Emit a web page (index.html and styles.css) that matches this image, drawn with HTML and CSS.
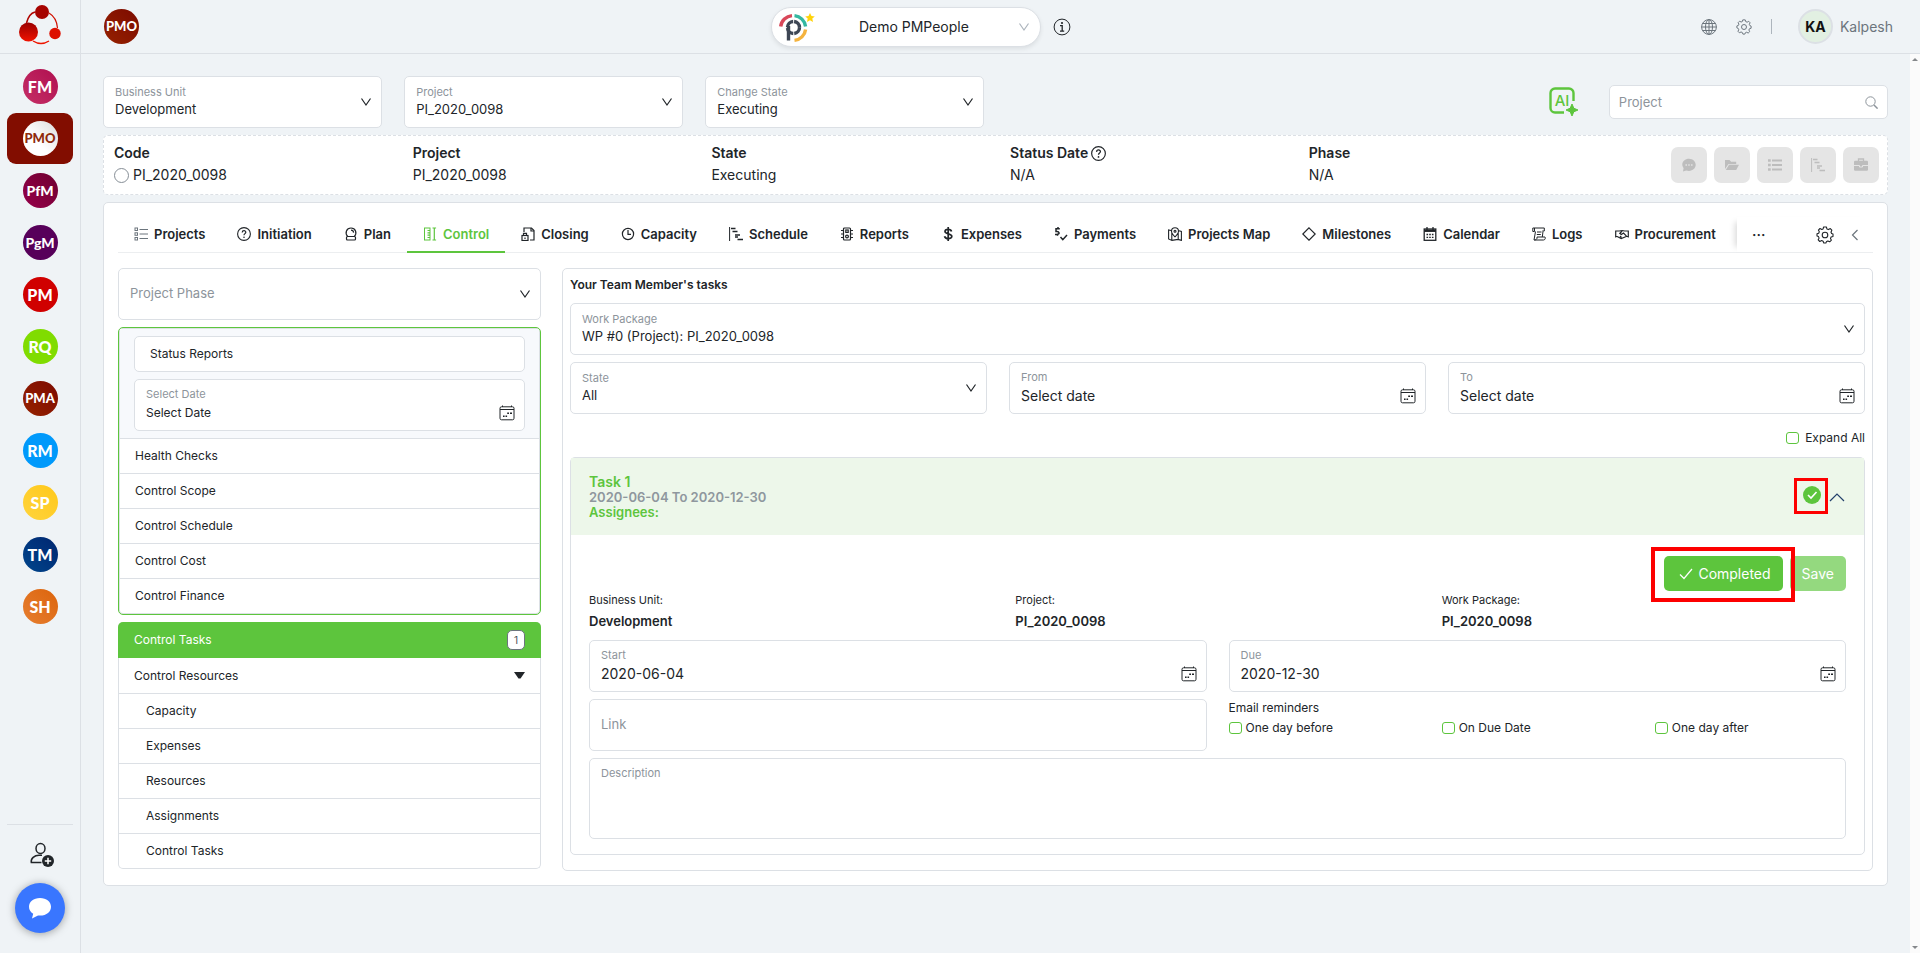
FILE: index.html
```html
<!DOCTYPE html>
<html lang="en">
<head>
    <meta charset="UTF-8">
    <meta name="viewport" content="width=device-width, initial-scale=1.0">
    <title>PMPeople</title>
    <link rel="stylesheet" href="styles.css">
</head>
<body>
    <!-- Shared icons -->
    <svg class="sprite" aria-hidden="true">
        <symbol id="i-down" viewBox="0 0 12 12"><path d="M1.5 2.5 6 9l4.5-6.500" fill="none" stroke="currentColor" stroke-width="1.200"/></symbol>
        <symbol id="i-calendar" viewBox="0 0 16 16">
            <rect x="1" y="1.800" width="14" height="13" rx="1.500" fill="none" stroke="currentColor"/>
            <path d="M1 4.500h14" stroke="currentColor" fill="none"/>
            <path d="M3.500 0.500v1.500M12.500 0.500v1.500" stroke="currentColor" fill="none"/>
            <path d="M4 10.500h1.600v1.500H4zM6.500 10.500h1.600v1.500H6.500zM8.200 7.500h1.800v1.500H8.200zM11 7.500h2v1.500h-2z" fill="currentColor"/>
        </symbol>
        <symbol id="i-gear" viewBox="0 0 18 18">
            <path d="M7.600 1h2.800l.5 1.900 1.600.7 1.800-1 1.500 1.600-.8 2 .6 1.200L17 8v2.400l-1.900.6-.6 1.400.9 1.800-1.700 1.600-1.800-.9-1.300.5L9.900 17H7.800l-.7-1.800-1.400-.6-1.900.9-1.600-1.700.9-1.700-.6-1.500L1 10V7.800l1.700-.6.6-1.400-.9-1.700L4 2.500l1.800.9 1.300-.5z" fill="none" stroke="currentColor" stroke-width="1.100" stroke-linejoin="round"/>
            <circle cx="9" cy="9" r="2.800" fill="none" stroke="currentColor" stroke-width="1.100"/>
        </symbol>
        <symbol id="i-help" viewBox="0 0 14 14">
            <circle cx="7" cy="7" r="6.400" fill="none" stroke="currentColor" stroke-width="1.100"/>
            <path d="M5.200 5.500C5.300 3 8.900 3.200 8.800 5.400 8.700 6.600 7 6.700 7 8.200" fill="none" stroke="currentColor" stroke-width="1.200"/>
            <circle cx="7" cy="10.200" r=".8" fill="currentColor"/>
        </symbol>
        <symbol id="i-gantt" viewBox="0 0 14 14"><path d="M.6 0v14" stroke="currentColor"/><path d="M2 1.500h4.500M3.500 4.500h5M6 8h5M8.500 12.500H14M6 10h3" stroke="currentColor" stroke-width="1.500"/></symbol>
    </svg>

    <header class="topbar">
        <a class="brand" href="#" aria-label="Home">
            <svg width="42" height="40" viewBox="0 0 42 40">
                <defs>
                    <linearGradient id="red" x1="0" y1="0" x2="0" y2="1"><stop offset="0" stop-color="#9a0000"/><stop offset="1" stop-color="#f01200"/></linearGradient>
                </defs>
                <path d="M7.500 18C9 12 12 8 16 7" fill="none" stroke="#b00500" stroke-width="1.600"/>
                <path d="M30 8c5 3 8 8 8.500 15" fill="none" stroke="#d01000" stroke-width="1.200"/>
                <path d="M14 36c5 3.200 11 3.200 16 0" fill="none" stroke="#ee1500" stroke-width="1.400"/>
                <circle cx="23" cy="7" r="7" fill="#a60300"/>
                <circle cx="9.500" cy="27" r="9.500" fill="url(#red)"/>
                <circle cx="36" cy="28.500" r="5.700" fill="#dd1000"/>
            </svg>
        </a>
        <div class="topbar-left"><span class="role role-long pmo">PMO</span></div>
        <div class="topbar-center">
            <button class="org" type="button">
                <svg width="38" height="32" viewBox="0 0 38 32">
                    <g fill="none" stroke-width="3.400">
                        <path d="M2.700 15.500A12.500 12.500 0 0 1 14 4.600" stroke="#d9485a"/>
                        <path d="M16.500 4.600A12.500 12.500 0 0 1 27.600 15.500" stroke="#35b8a0"/>
                        <path d="M27.600 18.500A12.500 12.500 0 0 1 16.500 29.400" stroke="#f4b33f"/>
                        <circle cx="15.500" cy="16.500" r="6" stroke="#3d4654" stroke-dasharray="8.400 1"/>
                        <path d="M10.500 15v14.500" stroke="#3d4654"/>
                    </g>
                    <path d="m32 2 1.500 3 3.300.4-2.500 2.200.7 3.400-3-1.700L29 11l.7-3.400-2.500-2.200 3.300-.4z" fill="#ffd30a"/>
                </svg>
                <span>Demo PMPeople</span>
                <svg class="org-arrow" width="12" height="12"><use href="#i-down"/></svg>
            </button>
            <button class="icon-btn" type="button" aria-label="Information">
                <svg width="18" height="18" viewBox="0 0 18 18"><circle cx="9" cy="9" r="7.900" fill="none" stroke="currentColor"/><circle cx="9" cy="5" r="1.100" fill="currentColor"/><path d="M7 7.700h2.200V13M7 13.200h4.200" fill="none" stroke="currentColor" stroke-width="1.300"/></svg>
            </button>
        </div>
        <div class="topbar-right">
            <button class="icon-btn muted" type="button" aria-label="Language">
                <svg width="16" height="16" viewBox="0 0 16 16" fill="none" stroke="currentColor"><circle cx="8" cy="8" r="7.400"/><ellipse cx="8" cy="8" rx="3.500" ry="7.400"/><path d="M8 .6v14.800M.6 8h14.800M1.800 4.500h12.400M1.800 11.500h12.400"/></svg>
            </button>
            <button class="icon-btn muted" type="button" aria-label="Settings"><svg width="16" height="16"><use href="#i-gear"/></svg></button>
            <span class="divider"></span>
            <a class="user" href="#"><span class="avatar">KA</span>Kalpesh</a>
        </div>
    </header>

    <div class="layout">
        <nav class="sidebar" aria-label="Roles">
            <a class="side-link" href="#"><span class="role fm">FM</span></a>
            <a class="side-link active" href="#"><span class="role role-long">PMO</span></a>
            <a class="side-link" href="#"><span class="role role-mid pfm">PfM</span></a>
            <a class="side-link" href="#"><span class="role role-mid pgm">PgM</span></a>
            <a class="side-link" href="#"><span class="role pm">PM</span></a>
            <a class="side-link" href="#"><span class="role rq">RQ</span></a>
            <a class="side-link" href="#"><span class="role role-long pmo">PMA</span></a>
            <a class="side-link" href="#"><span class="role rm">RM</span></a>
            <a class="side-link" href="#"><span class="role sp">SP</span></a>
            <a class="side-link" href="#"><span class="role tm">TM</span></a>
            <a class="side-link" href="#"><span class="role sh">SH</span></a>
            <div class="side-bottom">
                <button class="icon-btn" type="button" aria-label="Add user">
                    <svg width="26" height="26" viewBox="0 0 26 26">
                        <ellipse cx="11.500" cy="6.500" rx="4.500" ry="5" fill="none" stroke="currentColor" stroke-width="1.500"/>
                        <path d="M12.500 20.500H2.300c-.8-4 3.200-7.300 7.700-7.300h3" fill="none" stroke="currentColor" stroke-width="1.500"/>
                        <circle cx="19" cy="19" r="6" fill="currentColor"/>
                        <path d="M19 15.800v6.400M15.800 19h6.400" stroke="#fff" stroke-width="1.500"/>
                    </svg>
                </button>
                <button class="chat" type="button" aria-label="Chat">
                    <svg width="24" height="24" viewBox="0 0 24 24"><path d="M12 2C5.500 2 1 5.800 1 10.800c0 3 1.600 5.500 4.200 7L4 22.500l6-3c8 .8 13-3.200 13-8.700C23 5.800 18.500 2 12 2z" fill="#fff"/></svg>
                </button>
            </div>
        </nav>

        <main class="content">
            <div class="filters">
                <div class="field">
                    <div class="field-body">
                        <label for="business-unit">Business Unit</label>
                        <select id="business-unit"><option>Development</option></select>
                    </div>
                    <svg class="arrow"><use href="#i-down"/></svg>
                </div>
                <div class="field">
                    <div class="field-body">
                        <label for="project">Project</label>
                        <select id="project"><option>PI_2020_0098</option></select>
                    </div>
                    <svg class="arrow"><use href="#i-down"/></svg>
                </div>
                <div class="field">
                    <div class="field-body">
                        <label for="change-state">Change State</label>
                        <select id="change-state"><option>Executing</option></select>
                    </div>
                    <svg class="arrow"><use href="#i-down"/></svg>
                </div>
                <button class="ai-btn" type="button" aria-label="AI assistant">
                    <svg width="30" height="30" viewBox="0 0 30 30">
                        <path d="M24.500 14V6a4.500 4.500 0 0 0-4.500-4.500H6A4.500 4.500 0 0 0 1.500 6v15A4.500 4.500 0 0 0 6 25.500h9" fill="none" stroke="#5dc53d" stroke-width="2.400"/>
                        <text x="13" y="19" text-anchor="middle" class="ai-text">AI</text>
                        <path d="M23 17l1.800 4.200L29 23l-4.200 1.800L23 29l-1.800-4.200L17 23l4.200-1.800z" fill="#5dc53d" stroke="#5dc53d"/>
                    </svg>
                </button>
                <div class="search">
                    <input type="text" aria-label="Project" placeholder="Project">
                    <svg width="13" height="13" viewBox="0 0 13 13" fill="none" stroke="currentColor"><circle cx="5.500" cy="5.500" r="4.700"/><path d="m9 9 3.600 3.600" stroke-width="1.500"/></svg>
                </div>
            </div>

            <div class="summary">
                <div class="summary-item">
                    <strong>Code</strong>
                    <label class="code"><input type="radio" name="code">PI_2020_0098</label>
                </div>
                <div class="summary-item"><strong>Project</strong><span>PI_2020_0098</span></div>
                <div class="summary-item"><strong>State</strong><span>Executing</span></div>
                <div class="summary-item"><strong>Status Date <svg width="15" height="15"><use href="#i-help"/></svg></strong><span>N/A</span></div>
                <div class="summary-item"><strong>Phase</strong><span>N/A</span></div>
                <div class="summary-actions">
                    <button type="button" disabled aria-label="Comments"><svg viewBox="0 0 14 14"><path d="M7 .7C3.200.7.300 3.200.300 6.500c0 1.300.5 2.500 1.300 3.500L1 13.500l3.200-1c.9.300 1.800.4 2.800.4 3.800 0 6.700-2.800 6.700-6.100S10.800.7 7 .7z" fill="currentColor"/><path d="M3.500 7h1.400M6.300 7h1.400M9.100 7h1.400" stroke="#e5e5e5" stroke-width="1.500"/></svg></button>
                    <button type="button" disabled aria-label="Documents"><svg viewBox="0 0 14 14"><path d="M0 11V2h4.500l1.700 1.700h5V6H3.500z" fill="currentColor"/><path d="M4 6.800h10L11.200 12H.8z" fill="currentColor"/></svg></button>
                    <button type="button" disabled aria-label="List"><svg viewBox="0 0 14 14"><path d="M0 2.500h2.700M0 7h2.700M0 11.500h2.700" stroke="currentColor" stroke-width="2.600"/><path d="M4 2.500h10M4 7h10M4 11.500h10" stroke="currentColor" stroke-width="1.800"/></svg></button>
                    <button type="button" disabled aria-label="Schedule"><svg viewBox="0 0 14 14"><use href="#i-gantt"/></svg></button>
                    <button type="button" disabled aria-label="Briefcase"><svg viewBox="0 0 14 14"><path d="M4.500 3V1h5v2" fill="none" stroke="currentColor" stroke-width="1.300"/><rect y="2.700" width="14" height="10" rx="1.200" fill="currentColor"/><path d="M0 7.500h5.500v1.500h3V7.500H14" fill="none" stroke="#e5e5e5"/></svg></button>
                </div>
            </div>

            <section class="workspace">
                <div class="tabs">
                    <a class="tab" href="#"><svg viewBox="0 0 14 14" fill="none" stroke="#6c757d"><path d="M5.500 2.500H14M5.500 7H14M5.500 11.500H14"/><rect x="1" y="1" width="2.500" height="2.500"/><rect x="1" y="5.800" width="2.500" height="2.500"/><rect x="1" y="10.500" width="2.500" height="2.500"/></svg>Projects</a>
                    <a class="tab" href="#"><svg><use href="#i-help"/></svg>Initiation</a>
                    <a class="tab" href="#"><svg viewBox="0 0 14 14" fill="none" stroke="currentColor" stroke-width="1.200"><path d="M3.700 9.500C.5 6 2.500 1 7 1s6.500 5 3.300 8.500z"/><rect x="2.500" y="9.500" width="9" height="3.500" rx="1"/><path d="M7 3.200c1.500 0 2.500 1 2.600 2.400"/></svg>Plan</a>
                    <a class="tab active" href="#"><svg viewBox="0 0 14 14" fill="none" stroke="currentColor"><rect x="1.500" y="1" width="5.500" height="12"/><path d="M4.500 3.500H7M4.500 5.800H7M4.500 8.200H7M4.500 10.500H7M11.300 1v12M9.500 1h3.600M9.500 13h3.600" stroke-width="1.200"/></svg>Control</a>
                    <a class="tab" href="#"><svg viewBox="0 0 14 14" fill="none" stroke="currentColor" stroke-width="1.200"><path d="M3 5V1h7.500L13 3.500V13H9"/><path d="M10 1v3h3"/><rect x="1" y="8.500" width="6" height="5"/><path d="M2.500 8.500V6.300h3v2.200M4 10.500v1.500"/></svg>Closing</a>
                    <a class="tab" href="#"><svg viewBox="0 0 14 14" fill="none" stroke="currentColor" stroke-width="1.200"><circle cx="7" cy="7" r="5.600"/><path d="M7 3v4.300h3"/></svg>Capacity</a>
                    <a class="tab" href="#"><svg viewBox="0 0 14 14"><use href="#i-gantt"/></svg>Schedule</a>
                    <a class="tab" href="#"><svg viewBox="0 0 14 14" fill="none" stroke="currentColor" stroke-width="1.200"><rect x="3.500" y="1" width="7" height="12" rx="1"/><rect x="5.800" y="3" width="2.400" height="2.400"/><circle cx="7" cy="9.500" r="1.400"/><path d="M1 3.500h2M1 7h2M1 10.500h2M11 3.500h2M11 7h2M11 10.500h2"/></svg>Reports</a>
                    <a class="tab" href="#"><svg viewBox="0 0 14 14" fill="none" stroke="currentColor" stroke-width="1.700"><path d="M10.500 4.500C9.800 1.500 4 1.800 4 4.500c0 3 6.800 1.800 6.800 5 0 2.800-6.500 3-7.300-.3M7.200 0v14"/></svg>Expenses</a>
                    <a class="tab" href="#"><svg viewBox="0 0 14 14" fill="none" stroke="currentColor" stroke-width="1.500"><path d="M5.800 1.800H2v2.700c3.500-.5 4.500 3 .5 3H1M4 0v1.500M3.500 7.500v1.300M6.500 10l2.300 2.700L13 8"/></svg>Payments</a>
                    <a class="tab" href="#"><svg viewBox="0 0 14 14" fill="none" stroke="currentColor" stroke-width="1.100"><path d="M3 3.500.6 3v9l3.400 1.400 6-1 3.400 1V4.500L11 3.700M3.800 6v7M10.200 6v6.500M7 9.800C4.500 7.500 3.500 6 3.500 4.200c0-4.600 7-4.600 7 0C10.500 6 9.500 7.500 7 9.800z"/><circle cx="7" cy="4.200" r="1"/></svg>Projects Map</a>
                    <a class="tab" href="#"><svg viewBox="0 0 14 14" fill="none" stroke="currentColor" stroke-width="1.200"><path d="M7 .8 13.200 7 7 13.200.8 7z"/></svg>Milestones</a>
                    <a class="tab" href="#"><svg viewBox="0 0 14 14" fill="none" stroke="currentColor" stroke-width="1.300"><rect x="1.200" y="2" width="11.600" height="11.300"/><path d="M1.200 3.700h11.600" stroke-width="2.500"/><path d="M4 0v3M10 0v3M3.500 7.500h1.600M6.200 7.500h1.600M8.900 7.500h1.600M3.500 10.300h1.600M6.200 10.300h1.600M8.900 10.300h1.600"/></svg>Calendar</a>
                    <a class="tab" href="#"><svg viewBox="0 0 14 14" fill="none" stroke="currentColor"><path d="M2.500 4.500H.8V1h11.500v3h-2M2.500 4.500V1M3.500 4.500 2 13h9.500c2 0 2-2.500 1.500-3H5c.7 2-1.500 3-2.500 3M11 4.500 10.300 10M5 5h4.500M4.800 7.500h4"/></svg>Logs</a>
                    <a class="tab" href="#"><svg viewBox="0 0 14 14" fill="none" stroke="currentColor" stroke-width="1.200"><path d="M.7 3.500v7M13.300 3.500v7M.7 4h3.500l3-.5 2.500.5h3.600M.7 9.500h1.500l4 2 5-2h2.100M7 4 4.800 6.500l1.500 1L8.500 6l3 3.200M5 9l1.500 1.500"/></svg>Procurement</a>
                    <div class="tabs-more">
                        <button class="icon-btn dots" type="button" aria-label="More tabs">···</button>
                        <button class="icon-btn tabs-gear" type="button" aria-label="Tab settings"><svg width="18" height="18"><use href="#i-gear"/></svg></button>
                        <button class="icon-btn muted" type="button" aria-label="Collapse"><svg width="8" height="12" viewBox="0 0 8 12"><path d="M6.500 1 1.500 6l5 5" fill="none" stroke="currentColor" stroke-width="1.200"/></svg></button>
                    </div>
                </div>

                <div class="columns">
                    <div class="menu">
                        <div class="field">
                            <div class="field-body">
                                <select class="placeholder" aria-label="Project Phase"><option>Project Phase</option></select>
                            </div>
                            <svg class="arrow"><use href="#i-down"/></svg>
                        </div>

                        <div class="menu-group">
                            <div class="menu-head">
                                <a class="status-link" href="#">Status Reports</a>
                                <div class="field date">
                                    <div class="field-body">
                                        <label for="select-date">Select Date</label>
                                        <input id="select-date" type="text" value="Select Date">
                                    </div>
                                    <svg class="cal"><use href="#i-calendar"/></svg>
                                </div>
                            </div>
                            <a class="menu-row" href="#">Health Checks</a>
                            <a class="menu-row" href="#">Control Scope</a>
                            <a class="menu-row" href="#">Control Schedule</a>
                            <a class="menu-row" href="#">Control Cost</a>
                            <a class="menu-row" href="#">Control Finance</a>
                        </div>

                        <div class="menu-list">
                            <a class="menu-row selected" href="#">Control Tasks <span class="count">1</span></a>
                            <a class="menu-row" href="#">Control Resources <svg width="11" height="7" viewBox="0 0 11 7"><path d="M0 0h11L6.500 6.500h-2z" fill="currentColor"/></svg></a>
                            <a class="menu-row sub" href="#">Capacity</a>
                            <a class="menu-row sub" href="#">Expenses</a>
                            <a class="menu-row sub" href="#">Resources</a>
                            <a class="menu-row sub" href="#">Assignments</a>
                            <a class="menu-row sub" href="#">Control Tasks</a>
                        </div>
                    </div>

                    <div class="tasks">
                        <h2>Your Team Member's tasks</h2>
                        <div class="field">
                            <div class="field-body">
                                <label for="work-package">Work Package</label>
                                <select id="work-package"><option>WP #0 (Project): PI_2020_0098</option></select>
                            </div>
                            <svg class="arrow"><use href="#i-down"/></svg>
                        </div>
                        <div class="three">
                            <div class="field">
                                <div class="field-body">
                                    <label for="task-state">State</label>
                                    <select id="task-state"><option>All</option></select>
                                </div>
                                <svg class="arrow"><use href="#i-down"/></svg>
                            </div>
                            <div class="field date large">
                                <div class="field-body">
                                    <label for="from">From</label>
                                    <input id="from" type="text" value="Select date">
                                </div>
                                <svg class="cal"><use href="#i-calendar"/></svg>
                            </div>
                            <div class="field date large">
                                <div class="field-body">
                                    <label for="to">To</label>
                                    <input id="to" type="text" value="Select date">
                                </div>
                                <svg class="cal"><use href="#i-calendar"/></svg>
                            </div>
                        </div>
                        <label class="check expand"><input type="checkbox">Expand All</label>

                        <article class="task">
                            <div class="task-head">
                                <div>
                                    <h3>Task 1</h3>
                                    <p class="task-dates">2020-06-04 To 2020-12-30</p>
                                    <p class="task-assignees">Assignees:</p>
                                </div>
                                <div class="task-state">
                                    <span class="marked">
                                        <svg width="18" height="18" viewBox="0 0 18 18"><circle cx="9" cy="9" r="9" fill="#5dc53d"/><path d="m5 9 3 3 5.500-6" fill="none" stroke="#fff" stroke-width="1.600"/></svg>
                                        <i class="mark mark-small"></i>
                                    </span>
                                    <button class="icon-btn" type="button" aria-label="Collapse task"><svg width="16" height="10" viewBox="0 0 16 10"><path d="m1 9 7-7 7 7" fill="none" stroke="#23406b" stroke-width="1.200"/></svg></button>
                                </div>
                            </div>
                            <div class="task-body">
                                <div class="task-actions">
                                    <span class="marked">
                                        <button class="btn" type="button"><svg width="14" height="12" viewBox="0 0 14 12"><path d="m1 6.500 4 4L13 1" fill="none" stroke="#fff" stroke-width="1.200"/></svg>Completed</button>
                                        <i class="mark mark-wide"></i>
                                    </span>
                                    <button class="btn save" type="button" disabled>Save</button>
                                </div>
                                <dl class="three facts">
                                    <div><dt>Business Unit:</dt><dd>Development</dd></div>
                                    <div><dt>Project:</dt><dd>PI_2020_0098</dd></div>
                                    <div><dt>Work Package:</dt><dd>PI_2020_0098</dd></div>
                                </dl>
                                <div class="two">
                                    <div class="field date large">
                                        <div class="field-body">
                                            <label for="start">Start</label>
                                            <input id="start" type="text" value="2020-06-04">
                                        </div>
                                        <svg class="cal"><use href="#i-calendar"/></svg>
                                    </div>
                                    <div class="field date large">
                                        <div class="field-body">
                                            <label for="due">Due</label>
                                            <input id="due" type="text" value="2020-12-30">
                                        </div>
                                        <svg class="cal"><use href="#i-calendar"/></svg>
                                    </div>
                                    <div class="field">
                                        <div class="field-body"><input type="text" aria-label="Link" placeholder="Link"></div>
                                    </div>
                                    <fieldset class="reminders">
                                        <legend>Email reminders</legend>
                                        <div class="reminder-list">
                                            <label class="check"><input type="checkbox">One day before</label>
                                            <label class="check"><input type="checkbox">On Due Date</label>
                                            <label class="check"><input type="checkbox">One day after</label>
                                        </div>
                                    </fieldset>
                                </div>
                                <div class="description">
                                    <label for="description">Description</label>
                                    <textarea id="description"></textarea>
                                </div>
                            </div>
                        </article>
                    </div>
                </div>
            </section>
        </main>
        <div class="scrollbar"><i class="up"></i><i class="down"></i></div>
    </div>
</body>
</html>
```
FILE: styles.css
```css
* {
    box-sizing: border-box;
}
body {
    margin: 0;
    height: 100vh;
    display: flex;
    flex-direction: column;
    background-color: #eff3f6;
    color: #212529;
    font-family: Inter, "Liberation Sans", sans-serif;
    font-size: 13px;
    line-height: 18px;
    overflow: hidden;
}
a {
    color: inherit;
    text-decoration: none;
}
button, input, select, textarea {
    font: inherit;
    color: inherit;
}
h2, h3, p, dl, dd {
    margin: 0;
}
.sprite {
    position: absolute;
    width: 0;
    height: 0;
}
.icon-btn {
    display: flex;
    align-items: center;
    background: none;
    border: none;
    padding: 0;
    cursor: pointer;
}
.muted {
    color: #6c757d;
}

/* Top bar */
.topbar {
    flex: none;
    display: grid;
    grid-template-columns: 81px minmax(0, 13fr) auto minmax(0, 16fr);
    height: 54px;
    border-bottom: 1px solid #dce0e5;
}
.brand {
    display: flex;
    align-items: center;
    justify-content: center;
    border-right: 1px solid #dce0e5;
    padding-bottom: 4px;
}
.topbar-left, .topbar-center, .topbar-right {
    display: flex;
    align-items: center;
}
.topbar-left {
    padding-left: 23px;
}
.topbar-center {
    gap: 12px;
}
.org {
    display: flex;
    align-items: center;
    width: 270px;
    height: 40px;
    padding: 0 10px 0 6px;
    background-color: white;
    border: 1px solid #dce0e5;
    border-radius: 20px;
    box-shadow: 0 2px 4px rgba(0, 0, 0, 0.08);
    font-size: 14px;
}
.org span {
    flex: 1;
    padding-right: 6px;
    text-align: center;
}
.org-arrow {
    color: #adb5bd;
}
.topbar-right {
    justify-content: flex-end;
    gap: 19px;
    padding-right: 27px;
}
.divider {
    width: 1px;
    height: 15px;
    background-color: #adb5bd;
    margin-right: 7px;
}
.user {
    display: flex;
    align-items: center;
    gap: 7px;
    color: #6c757d;
    font-size: 14px;
}
.avatar {
    width: 35px;
    height: 35px;
    line-height: 31px;
    border: 2px solid #dce0e5;
    border-radius: 50%;
    background-color: #e2f0e2;
    color: #111;
    font-weight: bold;
    text-align: center;
}

/* Sidebar */
.layout {
    flex: 1;
    display: flex;
    min-height: 0;
}
.sidebar {
    flex: none;
    width: 81px;
    border-right: 1px solid #dce0e5;
    padding: 7px 7px 20px;
    display: flex;
    flex-direction: column;
    gap: 1px;
}
.side-link {
    display: flex;
    align-items: center;
    justify-content: center;
    height: 51px;
    border-radius: 9px;
}
.side-link.active {
    background-color: #820d00;
}
.role {
    width: 35px;
    height: 35px;
    line-height: 35px;
    border-radius: 50%;
    color: white;
    font-family: Lato, sans-serif;
    font-size: 16px;
    font-weight: 900;
    text-align: center;
}
.role-mid {
    font-size: 14px;
}
.role-long {
    font-size: 13px;
}
.active .role {
    background: linear-gradient(to bottom left, #dcdcdc, #fff 60%);
    color: #8f2a0c;
}
.fm { background: linear-gradient(to top right, #c52f66, #b01050); }
.pmo { background: linear-gradient(to top right, #962200, #7c0a00); }
.pfm { background: linear-gradient(to top right, #96004a, #6e0030); }
.pgm { background-color: #57005a; }
.pm { background-color: #d00000; }
.rq { background-color: #80dc00; }
.rm { background-color: #0099fb; }
.sp { background: linear-gradient(to top right, #ffd43c, #ffc81a); }
.tm { background: linear-gradient(to top right, #00468c, #002570); }
.sh { background: linear-gradient(to top right, #e67e30, #dc640c); }
.side-bottom {
    margin-top: auto;
    border-top: 1px solid #dce0e5;
    padding-top: 17px;
    display: flex;
    flex-direction: column;
    align-items: center;
    gap: 15px;
}
.side-bottom .icon-btn {
    padding-left: 4px;
}
.chat {
    display: flex;
    align-items: center;
    justify-content: center;
    width: 50px;
    height: 50px;
    border: none;
    border-radius: 50%;
    background-color: #3976ff;
    box-shadow: 0 1px 8px rgba(0, 0, 0, 0.35);
}

/* Content */
.content {
    flex: 1;
    min-width: 0;
    padding: 22px 22px 0;
}
.filters {
    display: grid;
    grid-template-columns: repeat(6, 1fr);
    gap: 22px;
    align-items: center;
}
.field {
    display: flex;
    align-items: center;
    height: 52px;
    padding: 0 9px 0 11px;
    background-color: white;
    border: 1px solid #dce0e5;
    border-radius: 5px;
}
.field-body {
    flex: 1;
    display: flex;
    flex-direction: column;
    padding-bottom: 3px;
}
.field.date .field-body {
    gap: 2px;
    padding-bottom: 2px;
}
.field label, .description label {
    font-size: 11px;
    line-height: 16px;
    color: #8d949b;
}
.field select, .field input {
    appearance: none;
    width: 100%;
    height: 18px;
    padding: 0;
    border: none;
    outline: none;
    background: none;
}
.field.large input {
    font-size: 14px;
}
.field .placeholder, .field input::placeholder {
    color: #8d949b;
    opacity: 1;
}
.arrow {
    width: 12px;
    height: 12px;
    pointer-events: none;
}
.cal {
    width: 16px;
    height: 16px;
    margin-top: 16px;
}
.ai-btn {
    grid-column: 5;
    justify-self: end;
    margin-right: 8px;
    padding: 0;
    border: none;
    background: none;
    display: flex;
}
.ai-text {
    font-size: 15px;
    font-weight: 500;
    fill: #5dc53d;
}
.search {
    display: flex;
    align-items: center;
    height: 34px;
    padding: 0 9px;
    background-color: white;
    border: 1px solid #dce0e5;
    border-radius: 5px;
    color: #8d949b;
}
.search input {
    flex: 1;
    min-width: 0;
    padding: 0;
    border: none;
    outline: none;
    background: none;
}
.search input::placeholder {
    color: #8d949b;
    opacity: 1;
}
.summary {
    display: grid;
    grid-template-columns: repeat(5, 11fr) 10fr;
    margin-top: 7px;
    height: 60px;
    padding: 6px 8px 0 10px;
    background-color: white;
    border: 1px dashed #dce0e5;
    border-radius: 5px;
    font-size: 14px;
}
.summary-item {
    display: flex;
    flex-direction: column;
    line-height: 22px;
}
.summary-item strong {
    display: flex;
    align-items: center;
    gap: 3px;
    font-weight: 600;
}
.code {
    display: flex;
    align-items: center;
    gap: 4px;
}
.code input {
    appearance: none;
    width: 15px;
    height: 15px;
    margin: 0;
    border: 1px solid #868e96;
    border-radius: 50%;
}
.summary-actions {
    display: flex;
    justify-content: flex-end;
    gap: 7px;
    padding-top: 5px;
}
.summary-actions button {
    display: flex;
    align-items: center;
    justify-content: center;
    width: 36px;
    height: 36px;
    padding: 0;
    border: none;
    border-radius: 7px;
    background-color: #e5e5e5;
    color: #bdbdbd;
}
.summary-actions svg {
    width: 14px;
    height: 14px;
}

/* Workspace */
.workspace {
    margin-top: 7px;
    padding: 14px 14px;
    background-color: white;
    border: 1px solid #dce0e5;
    border-radius: 5px;
}
.tabs {
    display: flex;
    height: 36px;
    border-bottom: 1px solid #eceef0;
    font-size: 13px;
    font-weight: 600;
    white-space: nowrap;
}
.tab {
    display: flex;
    align-items: center;
    gap: 6px;
    height: 36px;
    padding: 0 16px;
    border-bottom: 2px solid transparent;
}
.tab svg {
    width: 14px;
    height: 14px;
}
.tab.active {
    color: #5dc53d;
    border-bottom-color: #5dc53d;
}
.tabs-more {
    display: flex;
    align-items: center;
    margin-left: auto;
    width: 136px;
    padding-left: 15px;
    box-shadow: -7px 0 6px -5px rgba(0, 0, 0, 0.15);
}
.dots {
    font-size: 14px;
}
.tabs-gear {
    margin-left: auto;
    margin-right: 17px;
}
.tabs-more .muted {
    margin-right: 14px;
}
.columns {
    display: grid;
    grid-template-columns: repeat(4, minmax(0, 1fr));
    gap: 21px;
    margin-top: 15px;
}
.menu {
    display: flex;
    flex-direction: column;
    gap: 7px;
    font-size: 12px;
}
.menu .placeholder {
    font-size: 13px;
}
.menu-group {
    padding: 1px;
    border: 1px solid #5dc53d;
    border-radius: 5px;
    box-shadow: inset 0 0 0 1px #dce0e5;
}
.menu-head {
    display: flex;
    flex-direction: column;
    gap: 7px;
    padding: 7px 14px;
    background-color: #f7f9fc;
}
.status-link {
    padding: 8px 15px;
    background-color: white;
    border: 1px solid #dce0e5;
    border-radius: 5px;
}
.menu-row {
    display: flex;
    align-items: center;
    justify-content: space-between;
    height: 35px;
    padding: 0 15px;
    border-top: 1px solid #dce0e5;
}
.menu-list {
    border: 1px solid #dce0e5;
    border-top: none;
    border-radius: 5px;
}
.menu-list .sub {
    padding-left: 27px;
}
.menu-list .selected {
    height: 36px;
    margin: 0 -1px;
    padding: 0 16px;
    border: none;
    border-radius: 5px 5px 0 0;
    background-color: #5dc53d;
    color: white;
}
.selected + .menu-row {
    border-top: none;
}
.count {
    width: 18px;
    height: 20px;
    line-height: 18px;
    border: 1px solid #6c757d;
    border-radius: 5px;
    background-color: white;
    color: #495057;
    font-size: 10px;
    text-align: center;
}
.tasks {
    grid-column: span 3;
    padding: 7px 7px 15px;
    border: 1px solid #dce0e5;
    border-radius: 5px;
}
.tasks h2 {
    font-size: 12px;
    font-weight: 600;
    line-height: 18px;
    margin-bottom: 9px;
}
.three {
    display: grid;
    grid-template-columns: repeat(3, 1fr);
    gap: 22px;
    margin-top: 7px;
}
.check {
    display: flex;
    align-items: center;
    gap: 4px;
    font-size: 12px;
}
.check input {
    appearance: none;
    width: 13px;
    height: 12px;
    margin: 0;
    border: 1px solid #5dc53d;
    border-radius: 3px;
}
.expand {
    justify-content: flex-end;
    gap: 6px;
    margin: 15px 0 10px;
}
.task {
    border: 1px solid #dce0e5;
    border-radius: 5px;
}
.task-head {
    display: flex;
    justify-content: space-between;
    align-items: center;
    height: 77px;
    padding: 0 19px 0 18px;
    background-color: #edf7ea;
}
.task-head h3 {
    color: #5dc53d;
    font-size: 14px;
    font-weight: 600;
    line-height: 16px;
}
.task-head p {
    font-size: 13px;
    font-weight: 600;
    line-height: 15px;
}
.task-head .task-dates {
    color: #8f979e;
}
.task-head .task-assignees {
    color: #5dc53d;
}
.task-state {
    display: flex;
    align-items: center;
    gap: 8px;
}
.task-state .marked {
    margin-bottom: 4px;
}
.marked {
    position: relative;
    display: flex;
}
/* Red highlight frames drawn over the page */
.mark {
    position: absolute;
    border: 4px solid #fd0000;
    pointer-events: none;
}
.mark-small {
    inset: -8px -7px -10px -9px;
    border-width: 3px;
}
.mark-wide {
    inset: -9px -12px -11px -13px;
}
.task-body {
    padding: 21px 18px 15px;
}
.task-actions {
    display: flex;
    justify-content: flex-end;
    gap: 7px;
}
.btn {
    display: flex;
    align-items: center;
    gap: 5px;
    height: 35px;
    padding: 0 12px 0 15px;
    border: none;
    border-radius: 5px;
    background-color: #5dc53d;
    color: white;
    font-size: 14px;
}
.save {
    padding: 0 12px;
    background-color: #94d97f;
}
.facts {
    margin: 0 0 7px;
}
.facts dt {
    font-size: 11px;
    line-height: 18px;
}
.facts dd {
    font-size: 13px;
    font-weight: 600;
    line-height: 24px;
}
.two {
    display: grid;
    grid-template-columns: repeat(2, 1fr);
    gap: 7px 22px;
}
.reminders {
    margin: 0;
    padding: 0;
    border: none;
    min-width: 0;
}
.reminders legend {
    padding: 0;
    font-size: 12px;
}
.reminder-list {
    display: grid;
    grid-template-columns: repeat(3, 1fr);
    gap: 22px;
    padding-top: 2px;
}
.description {
    display: flex;
    flex-direction: column;
    height: 81px;
    margin-top: 7px;
    padding: 6px 11px;
    border: 1px solid #dce0e5;
    border-radius: 5px;
}
.description textarea {
    flex: 1;
    padding: 0;
    border: none;
    outline: none;
    resize: none;
    background: none;
}

/* Scroll track */
.scrollbar {
    flex: none;
    width: 10px;
    display: flex;
    flex-direction: column;
    justify-content: space-between;
    align-items: center;
    padding: 4px 0;
    background-color: #fbfbfb;
}
.scrollbar i {
    border: 3px solid transparent;
}
.scrollbar .up {
    border-top: none;
    border-bottom-color: #85888b;
}
.scrollbar .down {
    border-bottom: none;
    border-top-color: #85888b;
}
```
